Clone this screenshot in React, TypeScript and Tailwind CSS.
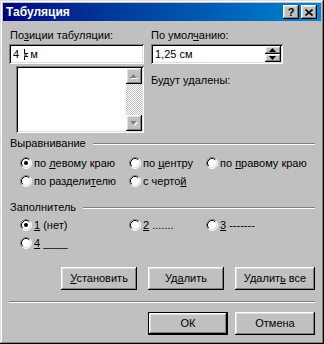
import type { ReactNode } from 'react'

const raised =
  'shadow-[inset_-1px_-1px_#000,inset_1px_1px_#fff,inset_-2px_-2px_#808080,inset_2px_2px_#dfdfdf]'
const sunken =
  'shadow-[inset_1px_1px_#808080,inset_-1px_-1px_#fff,inset_2px_2px_#000,inset_-2px_-2px_#dfdfdf]'

function RadioMark({ checked }: { checked?: boolean }) {
  return (
    <svg width="12" height="12" viewBox="0 0 12 12" className="shrink-0">
      <circle cx="6" cy="6" r="5" fill="#fff" />
      <path d="M2.11 9.89 A5.5 5.5 0 0 1 9.89 2.11" fill="none" stroke="#808080" />
      <path d="M9.89 2.11 A5.5 5.5 0 0 1 2.11 9.89" fill="none" stroke="#fff" />
      <path d="M2.82 9.18 A4.5 4.5 0 0 1 9.18 2.82" fill="none" stroke="#000" />
      <path d="M9.18 2.82 A4.5 4.5 0 0 1 2.82 9.18" fill="none" stroke="#dfdfdf" />
      {checked && <circle cx="6" cy="6" r="2" fill="#000" />}
    </svg>
  )
}

function Radio({ checked, children }: { checked?: boolean; children: ReactNode }) {
  return (
    <div className="flex h-[16px] items-center">
      <RadioMark checked={checked} />
      <span className="ml-[2px] whitespace-nowrap">{children}</span>
    </div>
  )
}

function GroupTitle({ children }: { children: ReactNode }) {
  return (
    <div className="flex items-center leading-[13px]">
      <span className="pl-[1px]">{children}</span>
      <div className="ml-[7px] h-[2px] flex-1 border-t border-b border-t-[#808080] border-b-white" />
    </div>
  )
}

function Button({ children, w, primary }: { children: ReactNode; w: string; primary?: boolean }) {
  if (primary) {
    return (
      <div className={`h-[23px] border border-black ${w}`}>
        <div className={`flex h-full items-center justify-center ${raised}`}>
          <span className="whitespace-nowrap">{children}</span>
        </div>
      </div>
    )
  }
  return (
    <div className={`flex h-[23px] items-center justify-center ${raised} ${w}`}>
      <span className="whitespace-nowrap">{children}</span>
    </div>
  )
}

function Arrow({ up, disabled }: { up?: boolean; disabled?: boolean }) {
  const d = up ? 'M3.5 0 L7 4 L0 4 Z' : 'M0 0 L7 0 L3.5 4 Z'
  return (
    <svg width="8" height="5" viewBox="0 0 8 5">
      {disabled && <path d={d} fill="#fff" transform="translate(1 1)" />}
      <path d={d} fill={disabled ? '#808080' : '#000'} />
    </svg>
  )
}

export default function App() {
  return (
    <div
      className={`h-[344px] w-[324px] bg-[#c0c0c0] p-[3px] font-['Liberation_Sans',Arial,sans-serif] text-[11px] text-black shadow-[inset_-1px_-1px_#000,inset_1px_1px_#dfdfdf,inset_-2px_-2px_#808080,inset_2px_2px_#fff]`}
    >
      <div className="flex h-[18px] items-center bg-gradient-to-r from-[#000080] to-[#1084d0] pr-[4px] pl-[3px]">
        <span className="text-[12px] font-bold text-white">Табуляция</span>
        <div className={`ml-auto flex h-[14px] w-[16px] items-center justify-center bg-[#c0c0c0] text-[11px] leading-none font-bold ${raised}`}>
          ?
        </div>
        <div className={`ml-[2px] flex h-[14px] w-[16px] items-center justify-center bg-[#c0c0c0] ${raised}`}>
          <svg width="8" height="7" viewBox="0 0 8 7">
            <path d="M0.5 0.5 L7.5 6.5 M7.5 0.5 L0.5 6.5" stroke="#000" strokeWidth="1.6" />
          </svg>
        </div>
      </div>

      <div className="px-[6px]">
        <div className="flex">
          <div className="w-[135px]">
            <div className="mt-[8px] pl-[1px] leading-[13px]">
              По<u>з</u>иции табуляции:
            </div>
            <div className={`mt-[2px] flex h-[20px] items-center bg-white px-[4px] ${sunken}`}>
              <span>4&nbsp;</span>
              <svg width="6" height="13" viewBox="0 0 6 13" className="mx-[1px]">
                <path d="M1.5 1 V5.5 H5 M1.5 12 V8.5 H5 M1 7 H4" stroke="#000" fill="none" />
              </svg>
              <span>м</span>
            </div>
            <div className={`mt-[2px] ml-[7px] flex h-[67px] justify-end bg-white p-[2px] ${sunken}`}>
              <div className="flex w-[16px] flex-col">
                <div className={`flex h-[16px] items-center justify-center bg-[#c0c0c0] ${raised}`}>
                  <Arrow up disabled />
                </div>
                <div className="flex-1 bg-[repeating-conic-gradient(#fff_0%_25%,#c0c0c0_0%_50%)] bg-[length:2px_2px]" />
                <div className={`flex h-[16px] items-center justify-center bg-[#c0c0c0] ${raised}`}>
                  <Arrow disabled />
                </div>
              </div>
            </div>
          </div>

          <div className="ml-[7px] w-[132px]">
            <div className="mt-[8px] leading-[13px]">
              По умол<u>ч</u>анию:
            </div>
            <div className={`mt-[2px] flex h-[20px] items-center bg-white p-[2px] ${sunken}`}>
              <span className="flex-1 pl-[2px]">1,25 см</span>
              <div className="flex h-full w-[16px] flex-col">
                <div className={`flex flex-1 items-center justify-center bg-[#c0c0c0] ${raised}`}>
                  <Arrow up />
                </div>
                <div className={`flex flex-1 items-center justify-center bg-[#c0c0c0] ${raised}`}>
                  <Arrow />
                </div>
              </div>
            </div>
            <div className="mt-[10px] leading-[13px]">Будут удалены:</div>
          </div>
        </div>

        <div className="mt-[4px]">
          <GroupTitle>Выравнивание</GroupTitle>
        </div>
        <div className="mt-[5px] grid grid-cols-[109px_77px_auto] gap-y-[2px] pl-[11px]">
          <Radio checked>
            по <u>л</u>евому краю
          </Radio>
          <Radio>
            по <u>ц</u>ентру
          </Radio>
          <Radio>
            по <u>п</u>равому краю
          </Radio>
          <Radio>
            по раздели<u>т</u>елю
          </Radio>
          <Radio>
            с черто<u>й</u>
          </Radio>
        </div>

        <div className="mt-[12px]">
          <GroupTitle>Заполнитель</GroupTitle>
        </div>
        <div className="mt-[3px] grid grid-cols-[109px_77px_auto] gap-y-[2px] pl-[11px]">
          <Radio checked>
            <u>1</u> (нет)
          </Radio>
          <Radio>
            <u>2</u> .......
          </Radio>
          <Radio>
            <u>3</u> -------
          </Radio>
          <Radio>
            <u>4</u> ____
          </Radio>
        </div>

        <div className="mt-[16px] flex justify-end gap-[11px]">
          <Button w="w-[76px]">
            <u>У</u>становить
          </Button>
          <Button w="w-[76px]">
            Уд<u>а</u>лить
          </Button>
          <Button w="w-[80px]">
            Удалит<u>ь</u> все
          </Button>
        </div>

        <div className="mt-[11px] h-[2px] border-t border-b border-t-[#808080] border-b-white" />

        <div className="mt-[9px] flex justify-end gap-[7px]">
          <Button w="w-[80px]" primary>
            ОК
          </Button>
          <Button w="w-[80px]">Отмена</Button>
        </div>
      </div>
    </div>
  )
}
